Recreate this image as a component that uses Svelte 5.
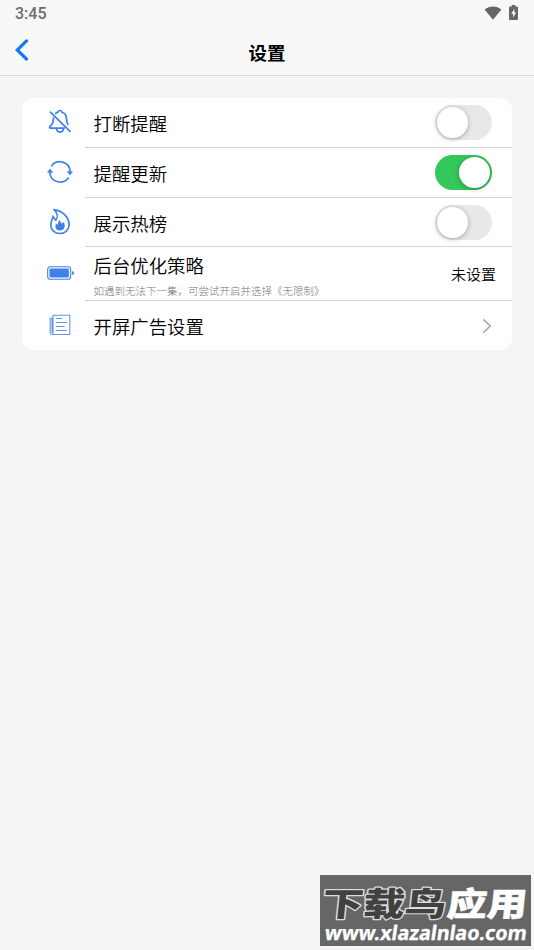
<!-- logic -->
<script>
  let rows = $state([
    { icon: "bell", label: "打断提醒", on: false },
    { icon: "refresh", label: "提醒更新", on: true },
    { icon: "flame", label: "展示热榜", on: false },
    {
      icon: "battery",
      label: "后台优化策略",
      note: "如遇到无法下一集，可尝试开启并选择《无限制》",
      value: "未设置",
    },
    { icon: "news", label: "开屏广告设置", link: true },
  ]);
</script>

<!-- structure -->
<main>
  <div class="status">
    <span>3:45</span>
    <svg class="wifi" width="18" height="14" viewBox="0 0 18 14">
      <path d="M0.600 3.500C5.500-.4 12.500-.4 17.400 3.500L9 13.700z" />
    </svg>
    <svg width="9" height="15" viewBox="0 0 9 15">
      <path d="M2.700 0h3.600v1.500H8q1 0 1 1V14q0 1-1 1H1q-1 0-1-1V2.500q0-1 1-1h1.700z" />
      <path class="bolt" d="M5.400 3.800 2.200 8.800h1.900v3.700l3-5H5.400z" />
    </svg>
  </div>

  <header>
    <button class="back" aria-label="返回">
      <svg width="14" height="22" viewBox="0 0 14 22">
        <path d="M11.500 1.900 2.200 11l9.300 9" />
      </svg>
    </button>
    <h1>设置</h1>
  </header>

  <section class="card">
    {#each rows as row}
      <div class="row" class:tall={row.note}>
        <div class="icon">
          {#if row.icon === "bell"}
            <svg width="24" height="26" viewBox="0 0 24 26">
              <path d="M5.600 8.300C5.300 12 5.200 15.200 2.200 17.200c-1.200.8-.8 1.900.4 1.900h14.200M7.200 4.900c1-1 1.500-1.500 2.600-1.700C10 .9 13.600.9 13.900 3.200c3.300 1 4.600 3.300 4.600 6.500 0 2.600.4 4.400 1.700 6.200M2 2.600l20.500 20.200" />
              <path d="M8.500 19.300c.1 5 6.900 5 7 0" />
            </svg>
          {:else if row.icon === "refresh"}
            <svg width="26" height="24" viewBox="0 0 26 24">
              <path d="M4.300 6.200A10.400 10.400 0 0 1 23.200 11.500M2.800 12.500A10.400 10.400 0 0 0 21.700 17.600" />
              <path class="solid" d="M0 12.800 3 8.600l3.200 4.200zM19.800 11.200h6.200l-3.100 4.200z" />
            </svg>
          {:else if row.icon === "flame"}
            <svg width="22" height="27" viewBox="0 0 22 27">
              <path d="M5.500 1.900c8 .7 14.600 7.600 14.600 14.700 0 5.300-4.100 8.900-9.200 8.900S1.800 21.900 1.800 17c0-3.500 1.500-5.400 2.200-8.300l2.800 3.400c2-2.100 2.300-6-1.300-10.200z" />
              <path class="solid" d="M10.600 11.800c.8 2.100 1.500 3 2.200 4l1.500-1.700c1.300 1.800 1.700 3.300 1.300 5-.5 2.100-2.300 3.500-4.700 3.500-2.700 0-4.500-1.600-4.500-4 0-1.300.3-2 .9-3l1.500 1.300c.1-2 .7-3.500 1.800-5.100z" />
            </svg>
          {:else if row.icon === "battery"}
            <svg class="thin" width="27" height="14" viewBox="0 0 27 14">
              <rect x=".7" y=".7" width="23" height="12.600" rx="2.800" />
              <rect class="solid" x="2.500" y="2.500" width="19.400" height="9" rx="1" />
              <path class="solid" d="M25 5q2 .4 2 2t-2 2z" />
            </svg>
          {:else}
            <svg class="paper" width="22" height="22" viewBox="0 0 22 22">
              <path d="M4 18.500V1.200h16.800v19.300H3q-1.800 0-1.800-1.800V4.300H3v14.400M3 20.500q1.300-.2 1.300-2" />
              <path d="M7 4.500h6M7 8.500h11M7 12.500h8.500M7 16.500h11" />
            </svg>
          {/if}
        </div>
        <div class="body">
          <div class="text">
            <p>{row.label}</p>
            {#if row.note}<small>{row.note}</small>{/if}
          </div>
          {#if row.value}
            <span class="value">{row.value}</span>
          {:else if row.link}
            <svg class="arrow" width="10" height="16" viewBox="0 0 10 16">
              <path d="M1.300 1.300 8.300 8l-7 6.700" />
            </svg>
          {:else}
            <button
              class="switch"
              class:on={row.on}
              role="switch"
              aria-checked={row.on}
              aria-label={row.label}
              onclick={() => (row.on = !row.on)}
            ></button>
          {/if}
        </div>
      </div>
    {/each}
  </section>

  <svg class="watermark" width="211" height="71" viewBox="0 0 211 71">
    <g class="name" transform="translate(1 40.500) skewX(-6)">
      <text class="dark" x="0" y="0" textLength="124" lengthAdjust="spacingAndGlyphs">下载鸟</text>
      <text class="light" x="125" y="0" textLength="80" lengthAdjust="spacingAndGlyphs">应用</text>
    </g>
    <g transform="translate(4 64.500) skewX(-8)">
      <text class="url" x="0" y="0" textLength="202" lengthAdjust="spacingAndGlyphs">www.xlazalnlao.com</text>
    </g>
  </svg>
</main>

<!-- look -->
<style>
  :global(body) {
    background: #f5f5f5;
    margin: 0;
    font-family: "Noto Sans CJK SC", sans-serif;
  }

  main {
    position: relative;
    height: 950px;
    color: #111;
  }

  p,
  h1 {
    margin: 0;
  }

  button {
    border: 0;
    padding: 0;
    cursor: pointer;
  }

  svg {
    display: block;
  }

  .status {
    display: flex;
    align-items: center;
    height: 27px;
    padding: 0 16px 0 15px;
    background: #f8f8f8;
    color: #6c6c6c;
    font: 500 16px/26px Roboto, sans-serif;
    fill: #666;
  }

  .status span {
    flex: 1;
    padding-top: 1px;
  }

  .status svg {
    margin-bottom: 2px;
  }

  .status .wifi {
    margin-right: 7px;
  }

  .bolt {
    fill: #f8f8f8;
  }

  header {
    display: grid;
    grid-template-columns: 60px 1fr 60px;
    align-items: center;
    height: 48px;
    background: #f8f8f8;
    border-bottom: 1px solid #d9d9d9;
  }

  h1 {
    font-size: 18.500px;
    font-weight: 700;
    line-height: 26px;
    text-align: center;
    padding-top: 2px;
    color: #000;
  }

  .back {
    width: 14px;
    margin: 0 0 2px 15px;
    background: none;
  }

  .back path {
    fill: none;
    stroke: #0f7bef;
    stroke-width: 3.200;
    stroke-linecap: round;
  }

  .card {
    margin: 22px 22px 0;
    background: #fff;
    border-radius: 12px;
    overflow: hidden;
  }

  .row {
    display: flex;
    height: 50px;
  }

  .row:nth-child(3),
  .row:last-child {
    height: 49px;
  }

  .row.tall {
    height: 54px;
  }

  .icon {
    display: flex;
    align-items: center;
    justify-content: center;
    width: 63px;
    padding: 0 0 3px 13px;
    box-sizing: border-box;
    fill: none;
    stroke: #3f80ec;
    stroke-width: 1.700;
  }

  .row:last-child .icon {
    padding-bottom: 1px;
  }

  .solid {
    fill: #3f80ec;
    stroke: none;
  }

  .thin {
    stroke-width: 1.100;
  }

  .paper {
    stroke: #6496e8;
    stroke-width: 1.100;
  }

  .body {
    flex: 1;
    display: flex;
    align-items: center;
    justify-content: space-between;
    padding: 0 20px 0 8.500px;
    border-bottom: 1px solid #d5d5d5;
  }

  .row:last-child .body {
    border: 0;
  }

  .text p {
    font-size: 18.400px;
    font-weight: 350;
    line-height: 27px;
    padding-top: 2px;
    color: #000;
  }

  .tall .text p {
    line-height: 26px;
    padding-top: 5px;
  }

  small {
    display: block;
    font-size: 10.500px;
    font-weight: 300;
    line-height: 20px;
    margin-top: 3px;
    color: #777;
    white-space: nowrap;
  }

  .value {
    font-size: 15px;
    font-weight: 350;
    margin-right: -4px;
    color: #000;
  }

  .switch {
    display: flex;
    width: 57px;
    height: 35px;
    padding: 2px;
    border-radius: 18px;
    background: #e8e8e8;
  }

  .switch::before {
    content: "";
    width: 31px;
    height: 31px;
    border-radius: 50%;
    background: #fff;
    box-shadow: 0 1px 5px rgba(0, 0, 0, 0.3);
  }

  .switch.on {
    justify-content: flex-end;
    background: #34c759;
  }

  .arrow {
    fill: none;
    stroke: #aaa;
    stroke-width: 1.600;
  }

  .watermark {
    position: absolute;
    left: 320px;
    top: 875px;
    background: #666;
  }

  .name {
    font-size: 33px;
    font-weight: 900;
    paint-order: stroke;
    stroke-linejoin: round;
  }

  .dark {
    fill: #414141;
    stroke: #ddd;
    stroke-width: 2.500;
  }

  .light {
    fill: #fff;
    stroke: #fff;
    stroke-width: 0.500;
  }

  .url {
    font: 700 20px "Noto Sans", sans-serif;
    fill: #fff;
    stroke: #fff;
    stroke-width: 0.300;
  }
</style>
